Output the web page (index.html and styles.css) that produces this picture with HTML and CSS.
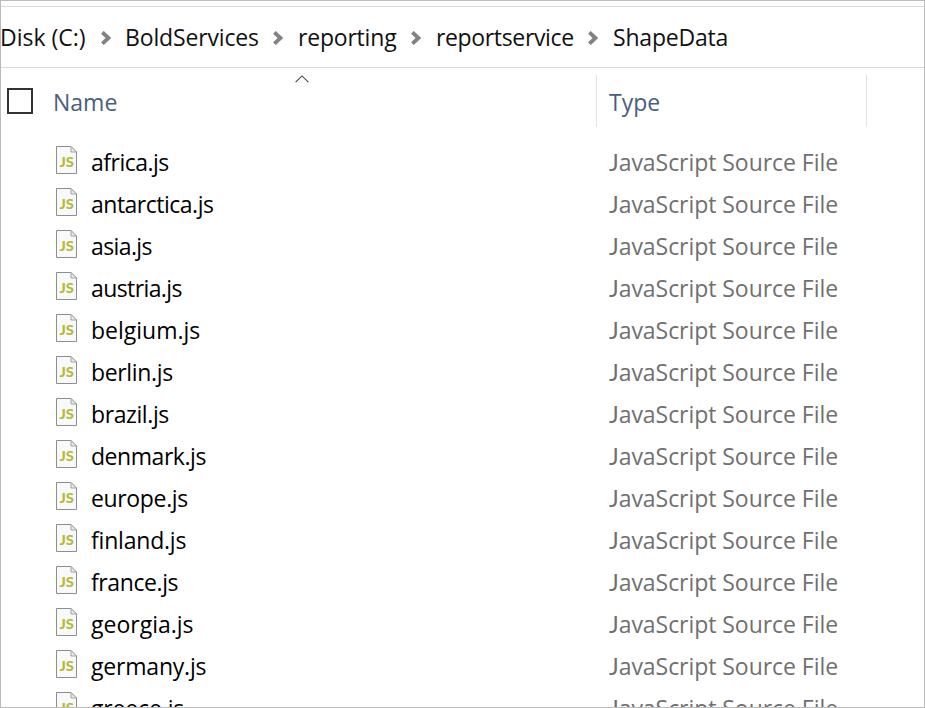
FILE: index.html
```html
<!DOCTYPE html>
<html lang="en">
<head>
<meta charset="utf-8">
<title>ShapeData</title>
<link rel="stylesheet" href="styles.css">
</head>
<body>
<svg class="defs" aria-hidden="true">
  <symbol id="chevron" viewBox="0 0 10 14"><path d="M1.4 1.3L7.4 7L1.4 12.7" fill="none" stroke="#828282" stroke-width="3.8"/></symbol>
  <symbol id="file" viewBox="0 0 21 28">
    <path d="M.5 .5H15L20.5 6V27.5H.5Z" fill="#f8f9fa" stroke="#8e8e8e"/>
    <path d="M15 .5V6H20.5Z" fill="#e9ebed" stroke="#a2a2a2"/>
  </symbol>
</svg>
<div class="window">
  <nav class="path">
    <span class="crumb disk">Disk (C:)</span><svg class="sep"><use href="#chevron"/></svg>
    <span class="crumb bold-services">BoldServices</span><svg class="sep"><use href="#chevron"/></svg>
    <span class="crumb reporting">reporting</span><svg class="sep"><use href="#chevron"/></svg>
    <span class="crumb service">reportservice</span><svg class="sep"><use href="#chevron"/></svg>
    <span class="crumb shape">ShapeData</span>
  </nav>
  <header class="columns">
    <div class="col name"><span class="check"></span><span class="label">Name</span>
      <svg class="sort" viewBox="0 0 14 8"><path d="M.6 7.2L7 .9L13.4 7.2" fill="none" stroke="#444" stroke-width="1.1"/></svg>
    </div>
    <div class="col type"><span class="label">Type</span></div>
  </header>
  <main class="files" id="files"></main>
</div>
<script src="files.js"></script>
</body>
</html>
```
FILE: styles.css
```css
* { box-sizing: border-box; }
body { margin: 0; background: #fff; font: 23px/42px "Open Sans", "Noto Sans", sans-serif; color: #111; }
.defs { position: absolute; width: 0; height: 0; }
.window { width: 925px; height: 708px; border: 1px solid #bbb; overflow: hidden; }
.path { height: 62px; margin-top: 5px; border-top: 1px solid #d9d9d9; border-bottom: 1px solid #d9d9d9; display: flex; align-items: center; white-space: nowrap; }
.crumb { flex: none; }
.disk { width: 101px; margin-left: -1px; }
.bold-services { width: 148px; margin-left: 14px; letter-spacing: -.15px; }
.reporting { width: 113px; margin-left: 15px; letter-spacing: -.2px; }
.service { width: 152px; margin-left: 15px; letter-spacing: -.35px; }
.shape { margin-left: 15px; letter-spacing: -.2px; }
.sep { flex: none; width: 10px; height: 14px; margin-top: 2px; }
.columns { display: flex; height: 73px; padding-top: 7px; color: #47607f; }
.col { position: relative; display: flex; align-items: center; height: 52px; border-right: 1px solid #e2e2e2; }
.label { padding-top: 2px; }
.name { width: 596px; padding-left: 6px; }
.type { width: 270px; padding-left: 12px; }
.check { width: 26px; height: 26px; border: 2px solid #333; margin-right: 20px; }
.sort { position: absolute; left: 293.5px; top: 0; width: 14px; height: 8px; }
.row { display: flex; height: 42px; padding-left: 55px; }
.icon { width: 21px; height: 28px; margin: 5px 14px 0 0; flex: none; }
.icon text { font: 900 14px Lato, sans-serif; fill: #b8b838; }
.filename { width: 518px; color: #000; }
.filetype { color: #707070; letter-spacing: -.05px; }
.initial { font-family: Lato, sans-serif; line-height: 1; }
```
FILE: files.js
```js
// Each file name with its letter spacing in pixels.
const files = [
  ["africa", -.5], ["antarctica", -.5], ["asia", -.6], ["austria", -.6],
  ["belgium", 0], ["berlin", -.35], ["brazil", -.4], ["denmark", -.45],
  ["europe", -.35], ["finland", -.2], ["france", -.4], ["georgia", 0],
  ["germany", -.2], ["greece", -.15]
];
document.getElementById("files").innerHTML = files.map(([name, spacing]) => `
  <div class="row">
    <svg class="icon" viewBox="0 0 21 28"><use href="#file"/><text x="3.5" y="21" textLength="14.5" lengthAdjust="spacingAndGlyphs">JS</text></svg>
    <span class="filename" style="letter-spacing: ${spacing}px">${name}.js</span>
    <span class="filetype"><span class="initial">J</span>avaScript Source File</span>
  </div>`).join("");
```
